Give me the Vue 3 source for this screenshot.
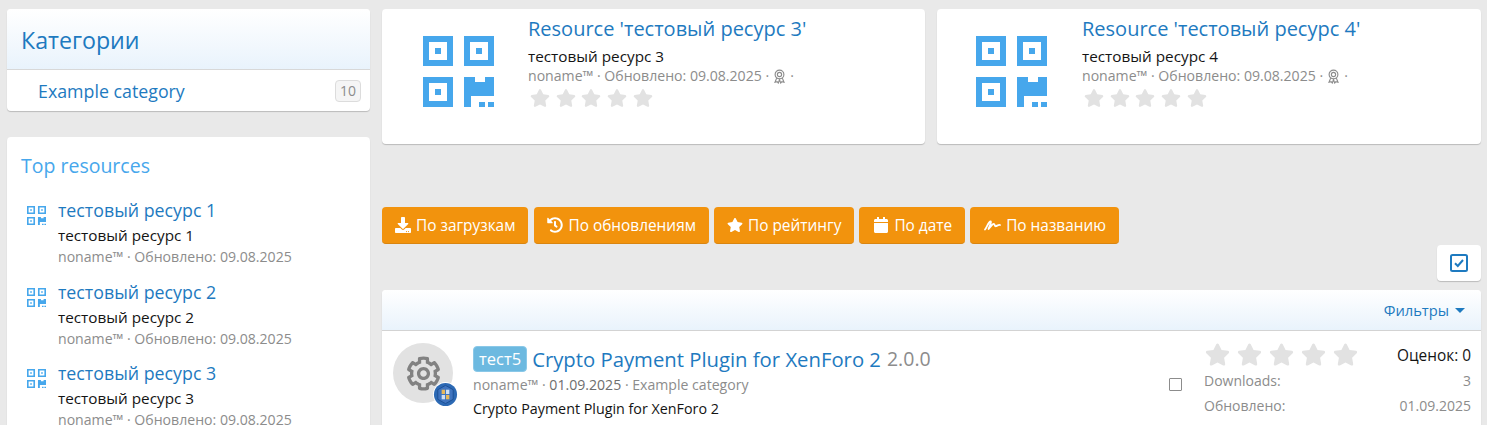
<script setup>
const stars = [1, 2, 3, 4, 5]
const starPath = 'M259.3 17.8L194 150.2 47.9 171.5c-26.2 3.8-36.7 36.1-17.7 54.6l105.7 103-25 145.5c-4.5 26.3 23.2 46 46.4 33.7L288 439.6l130.7 68.7c23.2 12.2 50.9-7.4 46.4-33.7l-25-145.5 105.7-103c19-18.5 8.5-50.8-17.7-54.6L382 150.2 316.7 17.8c-11.7-23.6-45.6-23.9-57.4 0z'
const top = [1, 2, 3]
const featured = [3, 4]
</script>

<template>
  <div class="page">
    <aside class="side">
      <section class="block cats">
        <h2 class="cats-head">Категории</h2>
        <div class="cats-row">
          <a class="cat-link">Example category</a>
          <span class="count">10</span>
        </div>
      </section>
      <section class="block tops">
        <h3 class="tops-head">Top resources</h3>
        <div v-for="n in top" :key="n" class="top-item">
          <svg class="qr-small" viewBox="0 0 71 71"><use href="#qr" /></svg>
          <div class="top-text">
            <a class="top-title">тестовый ресурс {{ n }}</a>
            <div class="top-desc">тестовый ресурс {{ n }}</div>
            <div class="muted">noname™ · Обновлено: 09.08.2025</div>
          </div>
        </div>
      </section>
    </aside>

    <main class="main">
      <svg class="defs" width="0" height="0">
        <defs>
          <g id="qr" fill="#46a7ec">
            <path fill-rule="evenodd" d="M0 0h30v30H0zM6 6v18h18V6zM12 12h6v6h-6z" />
            <path fill-rule="evenodd" d="M41 0h30v30H41zM47 6v18h18V6zM53 12h6v6h-6z" />
            <path fill-rule="evenodd" d="M0 41h30v30H0zM6 47v18h18V47zM12 53h6v6h-6z" />
            <path d="M41 41h11v5h10v-5h9v19H48v11h-7z" />
            <path d="M56 66h6v5h-6zM65 66h6v5h-6z" />
          </g>
        </defs>
      </svg>

      <div class="featured">
        <article v-for="n in featured" :key="n" class="block feat">
          <div class="feat-icon">
            <svg class="qr-big" viewBox="0 0 71 71"><use href="#qr" /></svg>
          </div>
          <div class="feat-body">
            <a class="feat-title">Resource 'тестовый ресурс {{ n }}'</a>
            <div class="feat-desc">тестовый ресурс {{ n }}</div>
            <div class="muted feat-meta">
              noname™ · Обновлено: 09.08.2025 ·
              <svg class="award" viewBox="0 0 16 18" fill="none" stroke="#8c8c8c" stroke-width="1.4">
                <circle cx="8" cy="6.5" r="5.4" />
                <circle cx="8" cy="6.5" r="2.6" />
                <path d="M4.5 11 2.5 16l2.6-.7L6.5 17 8 13l1.5 4 1.4-1.7 2.6.7-2-5" />
              </svg>
              ·
            </div>
            <div class="stars-sm">
              <svg v-for="s in stars" :key="s" viewBox="0 0 576 512"><path :d="starPath" /></svg>
            </div>
          </div>
        </article>
      </div>

      <div class="sorts">
        <a class="btn">
          <svg viewBox="0 0 512 512"><path d="M216 0h80c13.3 0 24 10.7 24 24v168h87.7c17.8 0 26.7 21.5 14.1 34.1L269.7 378.3c-7.5 7.5-19.8 7.5-27.3 0L90.1 226.1c-12.6-12.6-3.7-34.1 14.1-34.1H192V24c0-13.3 10.7-24 24-24zm296 376v112c0 13.3-10.7 24-24 24H24c-13.3 0-24-10.7-24-24V376c0-13.3 10.7-24 24-24h146.7l49 49c20.1 20.1 52.5 20.1 72.6 0l49-49H488c13.3 0 24 10.7 24 24zm-124 88c0-11-9-20-20-20s-20 9-20 20 9 20 20 20 20-9 20-20zm64 0c0-11-9-20-20-20s-20 9-20 20 9 20 20 20 20-9 20-20z" /></svg>
          По загрузкам
        </a>
        <a class="btn">
          <svg viewBox="0 0 512 512"><path d="M504 255.531c.253 136.64-111.18 248.372-247.82 248.468-59.015.042-113.223-20.53-155.822-54.911-11.077-8.94-11.905-25.541-1.839-35.607l11.267-11.267c8.609-8.609 22.353-9.551 31.891-1.984C173.062 425.135 212.781 440 256 440c101.705 0 184-82.311 184-184 0-101.705-82.311-184-184-184-48.814 0-93.149 18.969-126.068 49.932l50.754 50.754c10.08 10.08 2.941 27.314-11.313 27.314H24c-8.837 0-16-7.163-16-16V38.627c0-14.254 17.234-21.393 27.314-11.314l49.372 49.372C129.209 34.136 189.552 8 256 8c136.81 0 247.747 110.78 248 247.531zm-180.912 78.784l9.823-12.63c8.138-10.463 6.253-25.542-4.21-33.679L288 256.349V152c0-13.255-10.745-24-24-24h-16c-13.255 0-24 10.745-24 24v135.651l65.409 50.874c10.463 8.137 25.541 6.253 33.679-4.21z" /></svg>
          По обновлениям
        </a>
        <a class="btn">
          <svg viewBox="0 0 576 512"><path :d="starPath" /></svg>
          По рейтингу
        </a>
        <a class="btn">
          <svg class="cal" viewBox="0 0 448 512"><path d="M12 192h424c6.6 0 12 5.4 12 12v260c0 26.5-21.5 48-48 48H48c-26.5 0-48-21.5-48-48V204c0-6.6 5.4-12 12-12zm436-44v-36c0-26.5-21.5-48-48-48h-48V12c0-6.6-5.4-12-12-12h-40c-6.6 0-12 5.4-12 12v52H160V12c0-6.6-5.4-12-12-12h-40c-6.6 0-12 5.4-12 12v52H48C21.5 64 0 85.5 0 112v36c0 6.6 5.4 12 12 12h424c6.6 0 12-5.4 12-12z" /></svg>
          По дате
        </a>
        <a class="btn">
          <svg class="sig" viewBox="0 0 17 11" fill="none" stroke="#fff" stroke-width="1.800" stroke-linecap="round" stroke-linejoin="round"><path d="M1 9.500C3 7 4.500 1.500 6.500 1.500 8 1.500 5 7.500 4.500 9 6.500 7 8.500 3.500 10 4c1 .4.500 2.500 1.800 2.200 1.300-.3 2.700-1.700 4.200-1.200" /></svg>
          По названию
        </a>
      </div>

      <div class="tools">
        <button class="block check-btn" aria-label="Выбрать">
          <svg viewBox="0 0 18 18" fill="none" stroke="#1e7ac0" stroke-width="2"><rect x="1" y="1" width="16" height="16" rx="1.500" /><path d="M5 9.200 7.800 12 13 6" /></svg>
        </button>
      </div>

      <section class="block list">
        <div class="list-head">
          <a class="filters">Фильтры<span class="caret"></span></a>
        </div>
        <div class="row">
          <div class="avatar">
            <svg class="cog" viewBox="0 0 512 512"><path d="M452.515 237l31.843-18.382c9.426-5.441 13.996-16.542 11.177-27.054-11.404-42.531-33.842-80.547-64.058-110.797-7.68-7.688-19.575-9.246-28.985-3.811l-31.785 18.358a196.276 196.276 0 0 0-32.899-19.02V39.541a24.016 24.016 0 0 0-17.842-23.206c-41.761-11.107-86.117-11.121-127.93-.001-10.519 2.798-17.844 12.321-17.844 23.206v36.753a196.276 196.276 0 0 0-32.899 19.02l-31.785-18.358c-9.41-5.435-21.305-3.877-28.985 3.811-30.216 30.25-52.654 68.265-64.058 110.797-2.819 10.512 1.751 21.613 11.177 27.054L59.485 237a197.715 197.715 0 0 0 0 37.999l-31.843 18.382c-9.426 5.441-13.996 16.542-11.177 27.054 11.404 42.531 33.842 80.547 64.058 110.797 7.68 7.688 19.575 9.246 28.985 3.811l31.785-18.358a196.202 196.202 0 0 0 32.899 19.019v36.753a24.016 24.016 0 0 0 17.842 23.206c41.761 11.107 86.117 11.122 127.93.001 10.519-2.798 17.844-12.321 17.844-23.206v-36.753a196.34 196.34 0 0 0 32.899-19.019l31.785 18.358c9.41 5.435 21.305 3.877 28.985-3.811 30.216-30.25 52.654-68.266 64.058-110.797 2.819-10.512-1.751-21.613-11.177-27.054L452.515 275c1.22-12.65 1.22-25.35 0-38zm-52.679 63.019l43.819 25.289a200.138 200.138 0 0 1-33.849 58.528l-43.829-25.309c-31.984 27.397-36.659 30.077-76.168 44.029v50.599a200.917 200.917 0 0 1-67.618 0v-50.599c-39.504-13.95-44.196-16.642-76.168-44.029l-43.829 25.309a200.15 200.15 0 0 1-33.849-58.528l43.819-25.289c-7.63-41.299-7.634-46.719 0-88.038l-43.819-25.29c7.85-21.229 19.31-41.049 33.849-58.529l43.829 25.309c31.984-27.397 36.66-30.078 76.168-44.029V58.845a200.917 200.917 0 0 1 67.618 0v50.6c39.504 13.95 44.196 16.642 76.168 44.029l43.829-25.309a200.143 200.143 0 0 1 33.849 58.529l-43.819 25.29c7.631 41.3 7.634 46.718 0 88.037zM256 160c-52.935 0-96 43.065-96 96s43.065 96 96 96 96-43.065 96-96-43.065-96-96-96zm0 144c-26.468 0-48-21.532-48-48 0-26.467 21.532-48 48-48s48 21.533 48 48c0 26.468-21.532 48-48 48z" /></svg>
            <svg class="badge" viewBox="0 0 26 26">
              <circle cx="13" cy="13" r="13" fill="#fff" />
              <circle cx="13" cy="13" r="12" fill="#2c69b4" />
              <path d="M13 3.500 21 8v10l-8 4.500L5 18V8z" fill="#3f74bf" stroke="#1c4f94" />
              <rect x="9" y="8" width="3.500" height="4.500" fill="#e8b85a" />
              <rect x="13.500" y="8" width="3.500" height="4.500" fill="#cfe0f4" />
              <rect x="9" y="13.500" width="3.500" height="4.500" fill="#cfe0f4" />
              <rect x="13.500" y="13.500" width="3.500" height="4.500" fill="#e8b85a" />
            </svg>
          </div>
          <div class="row-main">
            <div class="row-title">
              <span class="label">тест5</span>
              <a class="row-link">Crypto Payment Plugin for XenForo 2</a>
              <span class="ver">2.0.0</span>
            </div>
            <div class="muted row-meta">noname™ · <span class="date">01.09.2025</span> · Example category</div>
            <div class="row-desc">Crypto Payment Plugin for XenForo 2</div>
          </div>
          <span class="tick"></span>
          <div class="row-stats">
            <div class="rate-line">
              <div class="stars-lg">
                <svg v-for="s in stars" :key="s" viewBox="0 0 576 512"><path :d="starPath" /></svg>
              </div>
              <span class="rate-count">Оценок: 0</span>
            </div>
            <div class="stat"><span>Downloads:</span><span>3</span></div>
            <div class="stat"><span>Обновлено:</span><span>01.09.2025</span></div>
          </div>
        </div>
      </section>
    </main>
  </div>
</template>

<style>
html, body { margin: 0; background: #e9e9e9; overflow: hidden; }
</style>

<style scoped>
.page {
  display: flex;
  gap: 12px;
  height: 425px;
  overflow: hidden;
  box-sizing: border-box;
  padding: 9px 6px 0 7px;
  font-family: "Open Sans", "Noto Sans", sans-serif;
  font-size: 13px;
  color: #141414;
  background: #e9e9e9;
}
.block {
  background: #fff;
  border-radius: 4px;
  box-shadow: 0 1px 1px rgba(0, 0, 0, .2);
}
.side { width: 363px; flex: none; display: flex; flex-direction: column; gap: 26px; }
.main { flex: 1; min-width: 0; }
.defs { position: absolute; }
.muted { color: #8c8c8c; font-size: 13px; }

.cats { overflow: hidden; flex: none; }
.cats-head {
  margin: 0;
  height: 61px;
  box-sizing: border-box;
  padding: 16px 14px 0;
  font-size: 23.200px;
  line-height: 30px;
  font-weight: 400;
  color: #1e7ac0;
  background: linear-gradient(#fff, #e9f3fc);
  border-bottom: 1px solid #d8d8d8;
}
.cats-row { height: 41px; display: flex; align-items: center; justify-content: space-between; padding: 0 9px 0 31px; }
.cat-link { font-size: 17.800px; color: #1e7ac0; }
.count {
  font-size: 14px;
  color: #8c8c8c;
  background: #f5f5f5;
  border: 1px solid #dcdcdc;
  border-radius: 4px;
  padding: 1px 4px;
  line-height: 18px;
}

.tops { flex: none; height: 300px; padding: 15px 14px 0; }
.tops-head { margin: 0 0 19px; font-size: 19.500px; line-height: 28px; font-weight: 400; color: #47a7ec; }
.top-item { display: flex; gap: 12px; padding-left: 6px; height: 81.500px; }
.qr-small { width: 19px; height: 19px; margin-top: 7px; flex: none; filter: blur(.3px); }
.top-title { display: block; font-size: 17.800px; line-height: 23px; color: #1e7ac0; }
.top-desc { font-size: 15.300px; line-height: 24px; margin-top: 1px; color: #141414; }
.top-text .muted { font-size: 14.100px; line-height: 18px; margin-top: 1px; }

.featured { display: flex; gap: 12px; height: 135px; }
.feat { flex: 1; display: flex; }
.feat:first-child { flex: none; width: 543px; }
.feat-icon { width: 146px; flex: none; padding: 27px 0 0 41px; box-sizing: border-box; }
.feat:last-child .feat-icon { width: 145px; padding-left: 39px; }
.qr-big { width: 71px; height: 71px; display: block; filter: blur(.5px); }
.feat-body { padding-top: 5px; }
.feat-title { display: block; font-size: 20px; line-height: 30px; color: #1e7ac0; }
.feat-desc { font-size: 15.300px; line-height: 24px; color: #141414; }
.feat-meta { font-size: 14.100px; line-height: 18px; display: flex; align-items: center; gap: 4px; margin-top: -1px; }
.award { width: 13px; height: 15px; }
.stars-sm { display: flex; gap: 5.700px; margin-top: 4px; padding-left: 2px; }
.stars-sm svg { width: 20px; height: 18px; fill: #e2e2e2; }

.sorts { display: flex; gap: 5px; margin-top: 63px; }
.btn {
  display: flex;
  align-items: center;
  gap: 5px;
  height: 37px;
  box-sizing: border-box;
  padding: 0 13px;
  background: #f2930d;
  border-bottom: 1px solid #d98510;
  border-radius: 4px;
  color: #fff;
  font-size: 15.400px;
  white-space: nowrap;
}
.btn:first-child { margin-right: 1px; }
.btn svg { width: 16px; height: 16px; fill: #fff; }
.btn svg.cal { width: 14px; margin-left: 2px; margin-right: 1px; }
.btn svg.sig { fill: none; width: 17px; height: 11px; margin-left: 1px; }

.tools { display: flex; justify-content: flex-end; margin-top: 1px; }
.check-btn { width: 44px; height: 36px; border: 0; padding: 0; display: flex; align-items: center; justify-content: center; }
.check-btn svg { width: 18px; height: 18px; }

.list { margin-top: 9px; min-height: 200px; border-radius: 4px 4px 0 0; overflow: hidden; }
.list-head {
  height: 41px;
  box-sizing: border-box;
  display: flex;
  align-items: center;
  justify-content: flex-end;
  padding-right: 16px;
  background: linear-gradient(#fff, #e9f3fc);
  border-bottom: 1px solid #d3d3d3;
}
.filters { font-size: 14.700px; color: #1e7ac0; display: flex; align-items: center; gap: 6px; }
.caret { width: 0; height: 0; border: 5px solid transparent; border-top: 5px solid #1e7ac0; border-bottom: 0; }

.row { display: flex; padding: 12px 10px 0 11px; }
.avatar { position: relative; width: 60px; height: 60px; border-radius: 50%; background: #e2e2e2; flex: none; display: flex; align-items: center; justify-content: center; }
.cog { width: 35px; height: 35px; fill: #828282; }
.badge { position: absolute; right: -5px; bottom: -4px; width: 25px; height: 25px; }
.row-main { flex: 1; min-width: 0; padding-left: 20px; padding-top: 2px; }
.row-title { display: flex; align-items: center; gap: 5px; height: 27px; }
.label {
  background: #6cb9e0;
  border: 1px solid #8ac8e8;
  color: #fff;
  font-size: 16.500px;
  line-height: 24px;
  padding: 0 5px;
  border-radius: 4px;
}
.row-link { font-size: 20.300px; color: #1e7ac0; }
.ver { font-size: 19.500px; margin-left: 1px; color: #8c8c8c; }
.row-meta { font-size: 14.100px; line-height: 22px; margin-top: 2px; }
.row-meta .date { color: #6e6e6e; }
.row-desc { font-size: 14.300px; line-height: 26px; color: #141414; }
.tick { width: 11px; height: 11px; border: 1px solid #8c8c8c; border-radius: 1px; margin-top: 35px; margin-right: 22px; flex: none; }
.row-stats { width: 267px; flex: none; }
.rate-line { display: flex; justify-content: space-between; align-items: center; height: 25px; }
.stars-lg { display: flex; gap: 7px; margin-top: -2px; margin-left: 1px; }
.stars-lg svg { width: 25px; height: 23px; fill: #e2e2e2; }
.rate-count { font-size: 15.400px; color: #141414; }
.stat { display: flex; justify-content: space-between; font-size: 14px; line-height: 25px; color: #8c8c8c; }
</style>
